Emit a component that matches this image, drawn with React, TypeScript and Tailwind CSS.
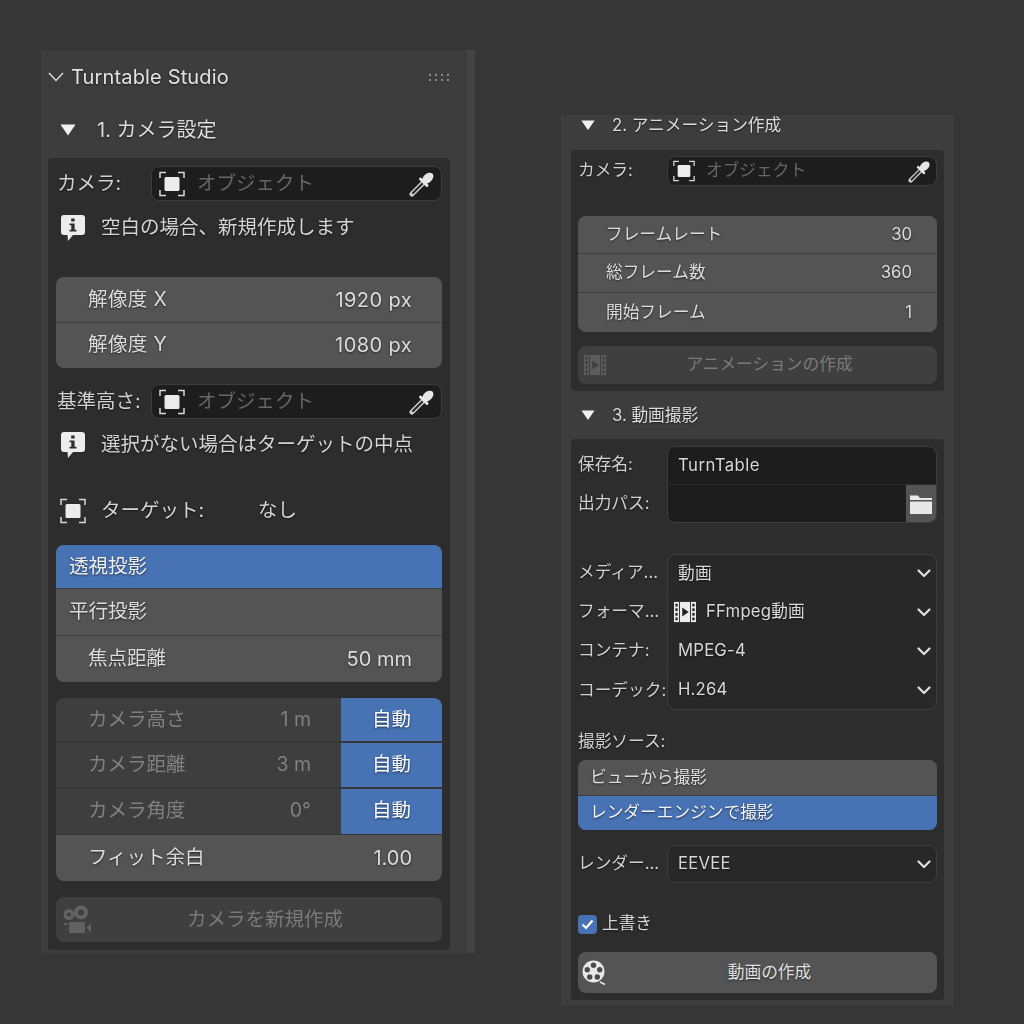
import type { ReactNode } from "react";

const shadow = "[text-shadow:0_1px_2px_rgba(0,0,0,0.55)]";

function ObjectIcon({ size }: { size: number }) {
  return (
    <svg width={size} height={size} viewBox="0 0 26 26" fill="none" className="shrink-0">
      <path d="M1 7V1.5H7M19 1.5H25V7M25 19V24.5H19M7 24.5H1V19" stroke="#d8d8d8" strokeWidth="1.5" />
      <rect x="5.5" y="6" width="15" height="14" rx="1.5" fill="#ececec" />
    </svg>
  );
}

function Dropper({ size }: { size: number }) {
  return (
    <svg width={size} height={size} viewBox="0 0 26 26" fill="none" className="shrink-0">
      <path d="M3 23L15 11" stroke="#cfcfcf" strokeWidth="5" strokeLinecap="round" />
      <path d="M4 22L14.5 11.5" stroke="#2a2a2a" strokeWidth="2.2" strokeLinecap="round" />
      <path d="M11.5 8L18 14.5" stroke="#e6e6e6" strokeWidth="3" strokeLinecap="round" />
      <ellipse cx="18.8" cy="7.2" rx="6.5" ry="4.4" transform="rotate(-45 18.8 7.2)" fill="#e6e6e6" />
    </svg>
  );
}

function InfoIcon() {
  return (
    <svg width="26" height="28" viewBox="0 0 26 28" className="shrink-0">
      <path
        d="M4 1H22C24 1 25 2 25 4V18C25 20 24 21 22 21H13L8 27L7.5 21H4C2 21 1 20 1 18V4C1 2 2 1 4 1Z"
        fill="#ececec"
      />
      <rect x="11.2" y="4.5" width="3.4" height="3" fill="#2d2d2d" />
      <path d="M9.5 9.5H14.6V15.8H16.5V17.6H9.5V15.8H11.3V11.3H9.5Z" fill="#2d2d2d" />
    </svg>
  );
}

function CameraIcon() {
  return (
    <svg width="30" height="29" viewBox="0 0 30 29" fill="#626262" className="shrink-0">
      <path
        fillRule="evenodd"
        d="M8 4a5.500 5.500 0 1 0 0 11a5.500 5.500 0 0 0 0-11ZM8 7.500a2 2 0 1 1 0 4a2 2 0 0 1 0-4ZM20 0.500a7 7 0 1 0 0 14a7 7 0 0 0 0-14ZM20 4.500a3 3 0 1 1 0 6a3 3 0 0 1 0-6Z"
      />
      <rect x="8" y="17" width="16" height="11" rx="1" />
      <path d="M25.500 22.500L30 18.500V27.500Z" />
      <rect x="3" y="18" width="3.500" height="2" />
    </svg>
  );
}

function FilmIcon({ size, fill, hole }: { size: number; fill: string; hole: string }) {
  const rows = [1, 6, 11, 16];
  return (
    <svg width={size} height={size} viewBox="0 0 24 22" className="shrink-0">
      <rect x="0" y="0" width="24" height="22" fill={fill} />
      {rows.map((y) => (
        <g key={y} fill={hole}>
          <rect x="1.500" y={y + 1} width="2.500" height="3" />
          <rect x="20" y={y + 1} width="2.500" height="3" />
        </g>
      ))}
      <rect x="5.500" y="0" width="1" height="22" fill={hole} />
      <rect x="17.500" y="0" width="1" height="22" fill={hole} />
      <path d="M9 6L16 11L9 16Z" fill={hole} />
    </svg>
  );
}

function ReelIcon() {
  return (
    <svg width="26" height="26" viewBox="0 0 26 26" className="shrink-0">
      <circle cx="11.500" cy="11.500" r="11" fill="#e8e8e8" />
      <g fill="#4a4a4a">
        <circle cx="11.500" cy="5.200" r="2.700" />
        <circle cx="5.300" cy="9.700" r="2.700" />
        <circle cx="17.700" cy="9.700" r="2.700" />
        <circle cx="7.700" cy="17" r="2.700" />
        <circle cx="15.300" cy="17" r="2.700" />
      </g>
      <path d="M18 22L23 24.500" stroke="#e8e8e8" strokeWidth="1.400" />
    </svg>
  );
}

function FolderIcon() {
  return (
    <svg width="22" height="20" viewBox="0 0 22 20" fill="#e8e8e8">
      <path d="M0 1.500H8L10 4H22V6H0Z" />
      <rect x="0" y="7.500" width="22" height="12.500" rx="0.500" />
    </svg>
  );
}

function Triangle({ w }: { w: number }) {
  return (
    <svg width={w} height={(w * 3) / 4} viewBox="0 0 16 12" className="shrink-0">
      <path d="M0.500 0.500H15.500L8 11.500Z" fill="#f0f0f0" />
    </svg>
  );
}

function ChevronDown() {
  return (
    <svg width="14" height="9" viewBox="0 0 14 9" fill="none" className="shrink-0">
      <path d="M1.500 1.500L7 7L12.500 1.500" stroke="#e0e0e0" strokeWidth="2.200" strokeLinecap="round" strokeLinejoin="round" />
    </svg>
  );
}

function LeftField({ label }: { label: string }) {
  return (
    <div className="flex h-[35px] items-center">
      <div className={`w-[96px] shrink-0 pl-[1px] text-[19.5px] text-[#d0d0d0] whitespace-nowrap ${shadow}`}>{label}</div>
      <div className="-ml-[1px] flex h-full flex-1 items-center rounded-lg border border-[#3d3d3d] bg-[#1d1d1d] pl-[7px] pr-[6px]">
        <ObjectIcon size={26} />
        <span className="ml-[12px] flex-1 text-[19.5px] text-[#666666]">オブジェクト</span>
        <Dropper size={26} />
      </div>
    </div>
  );
}

function RightField({ label }: { label: string }) {
  return (
    <div className="flex h-[30px] items-center">
      <div className={`w-[89px] shrink-0 text-[16.7px] text-[#d0d0d0] whitespace-nowrap ${shadow}`}>{label}</div>
      <div className="flex h-full flex-1 items-center rounded-lg border border-[#3d3d3d] bg-[#1d1d1d] pl-[5px] pr-[5px]">
        <ObjectIcon size={22} />
        <span className="ml-[11px] flex-1 text-[16.7px] text-[#666666]">オブジェクト</span>
        <Dropper size={23} />
      </div>
    </div>
  );
}

function Info({ text, h }: { text: string; h: string }) {
  return (
    <div className={`flex items-center pl-[4px] ${h}`}>
      <InfoIcon />
      <span className={`ml-[15px] text-[19.5px] text-[#d4d4d4] ${shadow}`}>{text}</span>
    </div>
  );
}

function NumRow({ label, value, className }: { label: string; value: string; className: string }) {
  return (
    <div className={`flex items-center justify-between bg-[#545454] pl-[32px] pr-[30px] text-[19.5px] text-[#dcdcdc] ${shadow} ${className}`}>
      <span>{label}</span>
      <span className="text-[20px]">{value}</span>
    </div>
  );
}

function AutoRow({ label, value, className, top }: { label: string; value: string; className: string; top?: boolean }) {
  return (
    <div className={`flex ${className}`}>
      <div className={`flex flex-1 items-center justify-between bg-[#3e3e3e] pl-[32px] pr-[30px] text-[19.5px] text-[#808080] ${top ? "rounded-tl-lg" : "pb-[1px]"}`}>
        <span>{label}</span>
        <span>{value}</span>
      </div>
      <div className={`flex w-[101px] items-center justify-center bg-[#4772b3] text-[19.5px] text-white ${shadow} ${top ? "rounded-tr-lg" : "pb-[1px]"}`}>
        自動
      </div>
    </div>
  );
}

function SmallRow({ label, value, className }: { label: string; value: string; className: string }) {
  return (
    <div className={`flex items-center justify-between bg-[#545454] pl-[28px] pr-[25px] text-[16.7px] text-[#dcdcdc] ${shadow} ${className}`}>
      <span>{label}</span>
      <span>{value}</span>
    </div>
  );
}

function LabelRow({ label, children }: { label: string; children: ReactNode }) {
  return (
    <div className="flex">
      <div className={`flex w-[89px] shrink-0 items-center text-[16.7px] text-[#d0d0d0] whitespace-nowrap ${shadow}`}>{label}</div>
      <div className="flex-1">{children}</div>
    </div>
  );
}

function Select({ value, className, icon }: { value: string; className: string; icon?: ReactNode }) {
  return (
    <div className={`flex items-center border-x border-[#3d3d3d] bg-[#282828] pl-[10px] pr-[5px] text-[16.7px] tracking-[0.2px] text-[#d8d8d8] ${shadow} ${className}`}>
      {icon}
      <span className="flex-1">{value}</span>
      <ChevronDown />
    </div>
  );
}

export default function App() {
  return (
    <div className="flex h-[1024px] w-[1024px] items-start overflow-hidden bg-[#363636] pl-[41px] font-['Inter','Noto_Sans_CJK_JP',sans-serif]">
      {/* main panel */}
      <div className="mt-[50px] flex h-[903px] w-[434px] shrink-0 bg-[#3d3d3d] blur-[0.4px]">
        <div className="w-[426px] pl-[7px]">
          <div className="flex h-[54px] items-center">
            <svg width="16" height="10" viewBox="0 0 16 10" fill="none" className="shrink-0">
              <path d="M1 1L8 8.500L15 1" stroke="#d8d8d8" strokeWidth="1.500" />
            </svg>
            <span className={`ml-[7px] flex-1 text-[20px] tracking-[0.15px] text-[#e2e2e2] ${shadow}`}>Turntable Studio</span>
            <div className="mr-[18px] grid grid-cols-4 gap-x-[4px] gap-y-[3px]">
              {[0, 1, 2, 3, 4, 5, 6, 7].map((d) => (
                <div key={d} className="h-[2px] w-[2px] bg-[#8a8a8a]" />
              ))}
            </div>
          </div>
          <div className="flex h-[54px] items-center pb-[2px] pl-[12px]">
            <Triangle w={16} />
            <span className={`ml-[21px] text-[20px] text-[#dcdcdc] ${shadow}`}>1. カメラ設定</span>
          </div>
          <div className="w-[402px] rounded bg-[#2d2d2d] px-[8px] pb-[8px] pt-[8px]">
            <LeftField label="カメラ:" />
            <Info text="空白の場合、新規作成します" h="h-[54px]" />
            <div className="mt-[22px] overflow-hidden rounded-lg bg-[#3d3d3d] tracking-[0.4px]">
              <NumRow label="解像度 X" value="1920 px" className="h-[45px]" />
              <NumRow label="解像度 Y" value="1080 px" className="mt-[1px] h-[45px] pb-[2px]" />
            </div>
            <div className="mt-[16px]">
              <LeftField label="基準高さ:" />
            </div>
            <Info text="選択がない場合はターゲットの中点" h="h-[52px]" />
            <div className="mt-[20px] flex h-[40px] items-center pl-[4px]">
              <ObjectIcon size={26} />
              <span className={`ml-[15px] w-[157px] text-[19.5px] text-[#d4d4d4] ${shadow}`}>ターゲット:</span>
              <span className={`text-[19.5px] text-[#d4d4d4] ${shadow}`}>なし</span>
            </div>
            <div className="mt-[14px] overflow-hidden rounded-lg bg-[#3d3d3d]">
              <div className={`flex h-[43px] items-center bg-[#4772b3] pl-[13px] text-[19.5px] text-[#f2f2f2] ${shadow}`}>透視投影</div>
              <div className={`mt-[1px] flex h-[46px] items-center bg-[#545454] pl-[13px] text-[19.5px] text-[#dcdcdc] ${shadow}`}>平行投影</div>
              <NumRow label="焦点距離" value="50 mm" className="mt-[1px] h-[46px] pb-[1px]" />
            </div>
            <div className="mt-[16px] overflow-hidden rounded-lg bg-[#363636]">
              <AutoRow label="カメラ高さ" value="1 m" className="h-[43px]" top />
              <AutoRow label="カメラ距離" value="3 m" className="mt-[2px] h-[44px]" />
              <AutoRow label="カメラ角度" value="0°" className="mt-[2px] h-[45px]" />
              <NumRow label="フィット余白" value="1.00" className="mt-[1px] h-[46px] pb-[1px]" />
            </div>
            <div className="relative mt-[16px] flex h-[45px] items-center justify-center rounded-lg bg-[#3f3f3f] pl-[32px] text-[19.5px] text-[#7a7a7a]">
              <div className="absolute left-[5px] top-[8px]">
                <CameraIcon />
              </div>
              カメラを新規作成
            </div>
          </div>
        </div>
        <div className="w-[8px] bg-[#444444]" />
      </div>

      {/* second panel */}
      <div className="ml-[86px] mt-[115px] h-[891px] w-[393px] shrink-0 bg-[#3d3d3d] px-[10px] blur-[0.4px]">
        <div className="flex h-[35px] items-start pl-[10px] pt-[1px]">
          <div className="flex h-[18px] items-center">
            <Triangle w={14} />
          </div>
          <span className={`ml-[17px] text-[16.7px] leading-[18px] text-[#dcdcdc] ${shadow}`}>2. アニメーション作成</span>
        </div>
        <div className="rounded bg-[#2d2d2d] px-[7px] pb-[7px] pt-[6px]">
          <RightField label="カメラ:" />
          <div className="mt-[30px] overflow-hidden rounded-lg bg-[#3d3d3d]">
            <SmallRow label="フレームレート" value="30" className="h-[37px]" />
            <SmallRow label="総フレーム数" value="360" className="mt-[1px] h-[38px]" />
            <SmallRow label="開始フレーム" value="1" className="mt-[1px] h-[39px]" />
          </div>
          <div className="relative mt-[14px] flex h-[38px] items-center justify-center rounded-lg bg-[#3f3f3f] pl-[24px] text-[16.7px] text-[#7a7a7a]">
            <div className="absolute left-[6px] top-[8px]">
              <FilmIcon size={22} fill="#5c5c5c" hole="#3f3f3f" />
            </div>
            アニメーションの作成
          </div>
        </div>

        <div className="flex h-[48px] items-center pl-[10px] pt-[1px]">
          <Triangle w={14} />
          <span className={`ml-[17px] text-[16.7px] text-[#dcdcdc] ${shadow}`}>3. 動画撮影</span>
        </div>
        <div className="rounded bg-[#2d2d2d] px-[7px] pb-[7px] pt-[7px]">
          <LabelRow label="保存名:">
            <div className={`flex h-[38px] items-center rounded-t-lg border border-b-0 border-[#3d3d3d] bg-[#1d1d1d] pl-[10px] pt-[1px] text-[16.7px] tracking-[0.5px] text-[#d8d8d8] ${shadow}`}>TurnTable</div>
          </LabelRow>
          <div className="mt-[1px]">
            <LabelRow label="出力パス:">
              <div className="flex h-[38px] overflow-hidden rounded-b-lg border border-t-0 border-[#3d3d3d] bg-[#1d1d1d]">
                <div className="flex-1" />
                <div className="flex w-[30px] items-center justify-center bg-[#545454]">
                  <FolderIcon />
                </div>
              </div>
            </LabelRow>
          </div>

          <div className="mt-[31px]">
            <LabelRow label="メディア...">
              <Select value="動画" className="h-[38px] rounded-t-lg border-t" />
            </LabelRow>
            <div className="mt-[1px]">
              <LabelRow label="フォーマ...">
                <Select
                  value="FFmpeg動画"
                  className="h-[38px] !pl-[6px]"
                  icon={
                    <div className="mr-[10px]">
                      <FilmIcon size={22} fill="#ececec" hole="#222222" />
                    </div>
                  }
                />
              </LabelRow>
            </div>
            <div className="mt-[1px]">
              <LabelRow label="コンテナ:">
                <Select value="MPEG-4" className="h-[38px]" />
              </LabelRow>
            </div>
            <div className="mt-[1px]">
              <LabelRow label="コーデック:">
                <Select value="H.264" className="h-[39px] rounded-b-lg border-b" />
              </LabelRow>
            </div>
          </div>

          <div className={`mb-[3px] mt-[17px] flex h-[30px] items-center text-[16.7px] text-[#d0d0d0] ${shadow}`}>撮影ソース:</div>
          <div className="overflow-hidden rounded-lg bg-[#3d3d3d]">
            <div className={`flex h-[35px] items-center bg-[#545454] pl-[12px] text-[16.7px] text-[#dcdcdc] ${shadow}`}>ビューから撮影</div>
            <div className={`mt-[1px] flex h-[34px] items-center bg-[#4772b3] pl-[12px] text-[16.7px] text-[#f2f2f2] ${shadow}`}>レンダーエンジンで撮影</div>
          </div>
          <div className="mt-[15px]">
            <LabelRow label="レンダー...">
              <Select value="EEVEE" className="h-[38px] rounded-lg border-y" />
            </LabelRow>
          </div>
          <div className="mt-[31px] flex h-[20px] items-center">
            <div className="flex h-[19px] w-[19px] items-center justify-center rounded-[4px] bg-[#4772b3]">
              <svg width="13" height="11" viewBox="0 0 13 11" fill="none">
                <path d="M1.500 5.500L5 9L11.500 1.500" stroke="#ffffff" strokeWidth="2.200" />
              </svg>
            </div>
            <span className={`ml-[5px] text-[16.7px] text-[#d8d8d8] ${shadow}`}>上書き</span>
          </div>
          <div className={`relative mt-[18px] flex h-[41px] items-center justify-center rounded-lg bg-[#545454] pl-[24px] text-[16.7px] text-[#e0e0e0] ${shadow}`}>
            <div className="absolute left-[4px] top-[8px]">
              <ReelIcon />
            </div>
            動画の作成
          </div>
        </div>
      </div>
    </div>
  );
}
